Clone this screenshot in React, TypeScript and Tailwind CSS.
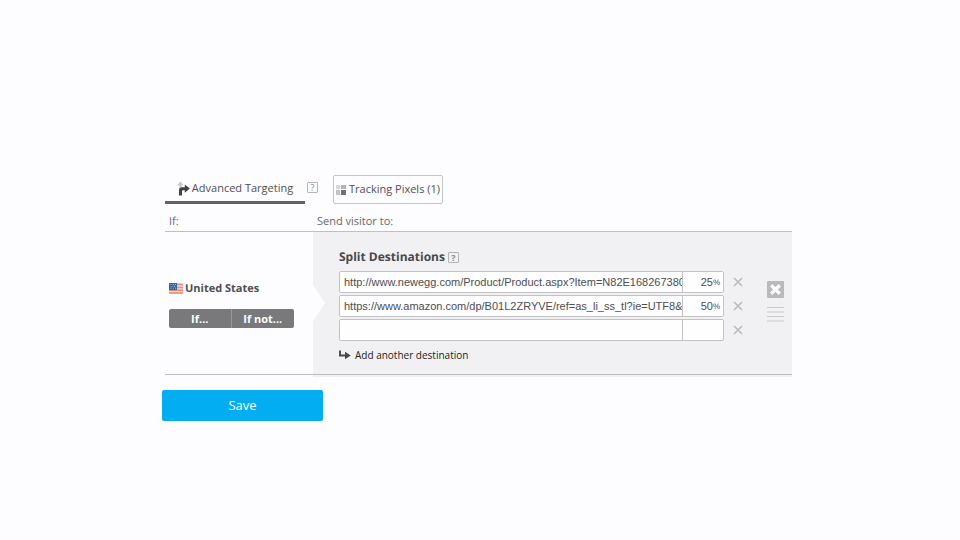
import { useState } from "react";

const initialRows = [
  { url: "http://www.newegg.com/Product/Product.aspx?Item=N82E1682673801", share: "25" },
  { url: "https://www.amazon.com/dp/B01L2ZRYVE/ref=as_li_ss_tl?ie=UTF8&linkCode=ll1", share: "50" },
  { url: "", share: "" },
];

function Help({ label }: { label: string }) {
  return (
    <button
      type="button"
      aria-label={label}
      className="flex h-[11px] w-[11px] items-center justify-center rounded-[1px] border border-[#b5b5b9] text-[9px] leading-none text-[#8a8a8e]"
    >
      ?
    </button>
  );
}

function TurnIcon() {
  return (
    <svg viewBox="0 0 13 15" className="h-[15px] w-[13px]" aria-hidden="true">
      <path d="M2.4 9V4.2H0.2L3.4 0.4 6.6 4.2H4.6V7.5Z" fill="#c4c4c6" />
      <path d="M2 14.5V9.5Q2 6.2 5.3 6.2H7.8V3.4L12.8 7.6 7.8 11.8V9.2H6Q5 9.2 5 10.3V14.5Z" fill="#424244" />
    </svg>
  );
}

function PixelsIcon() {
  return (
    <svg viewBox="0 0 10 10" className="h-[10px] w-[10px]" aria-hidden="true">
      <path d="M0 0h4v4H0z" fill="#d8d8d9" />
      <path d="M5 0h5v4H5z" fill="#b3b3b4" />
      <path d="M0 5h4v5H0z" fill="#c4c4c5" />
      <path d="M5 5h5v5H5z" fill="#727274" />
    </svg>
  );
}

function FlagIcon() {
  return (
    <svg viewBox="0 0 14 11" className="h-[11px] w-[14px]" aria-hidden="true">
      <path d="M0 0h14v11H0z" fill="#f5d9cf" />
      <path d="M0 1.5h14M0 4.5h14M0 7.2h14M0 10h14" stroke="#e08f78" strokeWidth="1.4" />
      <path d="M0 0h8v7H0z" fill="#34679f" />
      <path d="M1.5 1.5h1M4 1.5h1M6 1.5h1M2.5 3.3h1M5 3.3h1M1.5 5.2h1M4 5.2h1M6 5.2h1" stroke="#a9c7e2" strokeWidth="0.9" />
    </svg>
  );
}

function AddIcon() {
  return (
    <svg viewBox="0 0 12 10" className="h-[10px] w-[12px]" aria-hidden="true">
      <path d="M1 0.5V5.5H8" fill="none" stroke="#48484a" strokeWidth="1.9" />
      <path d="M6 1.8L11.8 5.5 6 9.2Z" fill="#48484a" />
    </svg>
  );
}

export default function App() {
  const [rows, setRows] = useState(initialRows);
  const update = (i: number, key: "url" | "share", value: string) =>
    setRows(rows.map((r, n) => (n === i ? { ...r, [key]: value } : r)));

  return (
    <main className="min-h-screen bg-[#fdfcfe] px-4 pt-[175px] font-['Open_Sans',sans-serif] text-[11px] text-[#505053] [text-rendering:geometricPrecision]">
      <div className="mx-auto w-full max-w-[630px] -translate-x-[3px]">
        <div className="ml-[3px]">
          <nav className="flex h-[29px] items-stretch">
            <button
              type="button"
              className="flex w-[140px] items-center justify-center gap-[2px] border-b-[3px] border-[#626165]"
            >
              <TurnIcon />
              Advanced Targeting
            </button>
            <div className="flex w-[28px] items-center pb-1 pl-[2px]">
              <Help label="About advanced targeting" />
            </div>
            <button
              type="button"
              className="flex w-[110px] items-center justify-center gap-[3px] rounded-[2px] border border-[#c3c5c6]"
            >
              <PixelsIcon />
              Tracking Pixels (1)
            </button>
          </nav>

          <div className="flex h-[28px] items-end border-b border-[#c0c0c2] pb-px text-[#68686a]">
            <span className="w-[148px] shrink-0 pl-1">If:</span>
            <span className="pl-1">Send visitor to:</span>
          </div>

          <section className="flex border-b border-[#bcbcbe] bg-[linear-gradient(to_right,transparent_148px,#f1f0f3_148px)]">
            <div className="flex w-[148px] shrink-0 flex-col justify-center pl-1 pt-[2px]">
              <h2 className="flex items-center gap-[2px] font-bold leading-4">
                <FlagIcon />
                United States
              </h2>
              <div className="mt-3 flex w-[125px] overflow-hidden rounded-[2px] bg-[#79797c] font-bold leading-[19px] text-white">
                <button type="button" className="w-1/2 border-r border-[#99999c]">If...</button>
                <button type="button" className="w-1/2">If not...</button>
              </div>
            </div>
            <svg viewBox="0 0 13 36" className="h-9 w-[13px] shrink-0 self-center" aria-hidden="true">
              <path d="M0 0L12 18 0 36Z" fill="#fdfcfe" />
            </svg>

            <div className="flex min-w-0 flex-1 flex-col pb-[11px] pl-[13px] pt-4">
              <h3 className="flex items-center gap-[3px] text-[12px] font-bold leading-[18px] text-[#48484b]">
                Split Destinations
                <Help label="About split destinations" />
              </h3>
              <div className="mt-[5px] flex flex-col gap-[2px]">
                {rows.map((row, i) => (
                  <div key={i} className="flex items-center gap-[9px]">
                    <div className="flex h-[22px] min-w-0 flex-1 overflow-hidden rounded-[2px] border border-[#c3c3c5] bg-[#fefdff] font-['Liberation_Sans',sans-serif] text-[#4e4e50]">
                      <input
                        aria-label={`Destination ${i + 1}`}
                        value={row.url}
                        onChange={(e) => update(i, "url", e.target.value)}
                        className="min-w-0 flex-1 pl-1 outline-none"
                      />
                      <label className="flex w-[41px] items-center border-l border-[#c3c3c5] pr-[3px]">
                        <input
                          aria-label={`Share ${i + 1}`}
                          value={row.share}
                          onChange={(e) => update(i, "share", e.target.value)}
                          className="min-w-0 flex-1 text-right outline-none"
                        />
                        <span className="w-[7px] pt-px text-[8px]">{row.share && "%"}</span>
                      </label>
                    </div>
                    <button type="button" aria-label={`Remove destination ${i + 1}`}>
                      <svg viewBox="0 0 10 10" className="h-[10px] w-[10px]">
                        <path d="M1 1L9 9M9 1L1 9" stroke="#bcbcbf" strokeWidth="1.7" />
                      </svg>
                    </button>
                  </div>
                ))}
              </div>
              <button type="button" className="mt-[6px] flex items-center gap-1 self-start text-[10px] leading-4 text-[#1e1e20]">
                <AddIcon />
                Add another destination
              </button>
            </div>

            <div className="flex w-[49px] shrink-0 flex-col items-center gap-2 pl-4 pt-[49px]">
              <button type="button" aria-label="Delete rule">
                <svg viewBox="0 0 17 17" className="h-[17px] w-[17px]">
                  <rect width="17" height="17" rx="1" fill="#b9b9bb" />
                  <path d="M4.2 4.2L12.8 12.8M12.8 4.2L4.2 12.8" stroke="#faf9fc" strokeWidth="3.4" />
                </svg>
              </button>
              <button type="button" aria-label="Reorder rule">
                <svg viewBox="0 0 17 16" className="h-4 w-[17px]">
                  <path d="M0 1.5h17M0 6h17M0 10.5h17M0 15h17" stroke="#c9c9cb" strokeWidth="1.2" />
                </svg>
              </button>
            </div>
          </section>
          <div className="ml-[148px] h-[2px] bg-[#f1f0f3]" />
        </div>
        <button type="submit" className="mt-[13px] h-[31px] w-[161px] rounded-[2px] bg-[#02adf1] text-[13px] text-white">
          Save
        </button>
      </div>
    </main>
  );
}
